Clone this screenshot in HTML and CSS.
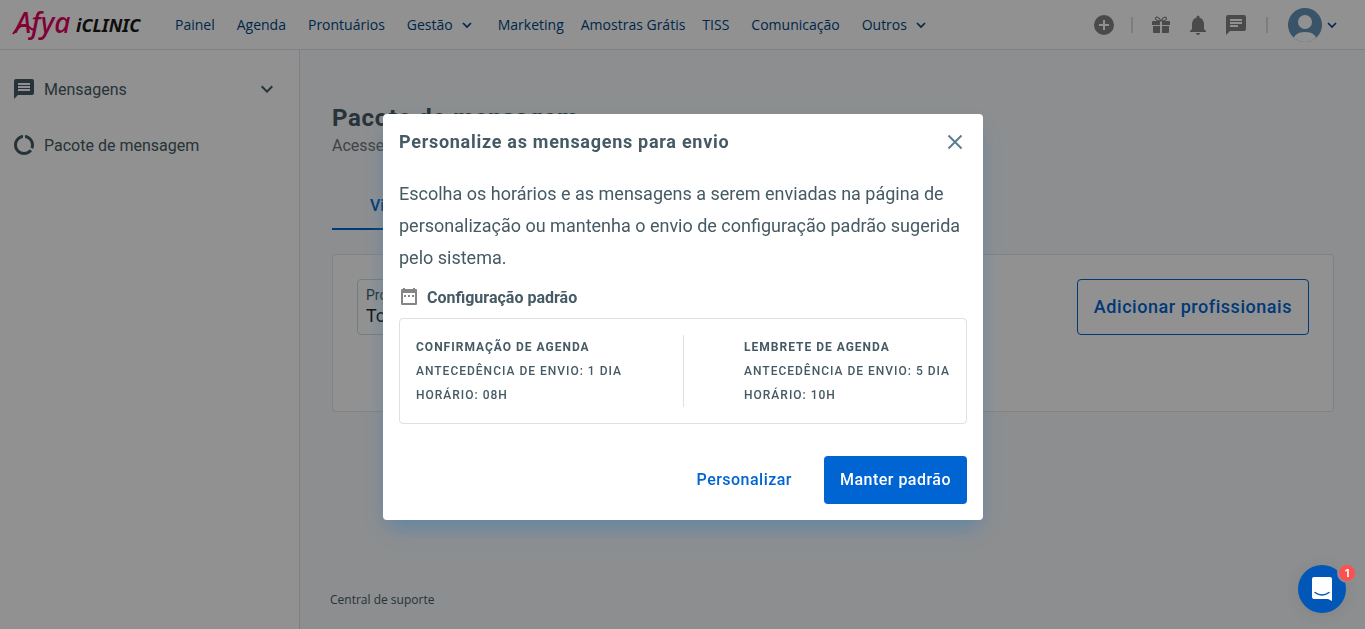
FILE: index.html
```html
<!DOCTYPE html>
<html lang="pt-BR">
<head>
<meta charset="utf-8">
<meta name="viewport" content="width=device-width, initial-scale=1">
<title>Pacote de mensagem</title>
<link rel="stylesheet" href="styles.css">
</head>
<body>
<div class="app">
  <header class="topbar">
    <a class="brand" href="#" aria-label="Afya iClinic">
      <svg width="132" height="44" viewBox="0 0 132 44">
        <text class="brand-afya" x="4" y="30">Afya</text>
        <path d="M2 31c5-7 11-12 16-7 1.500 1.500 3 2.500 5 3" fill="none" stroke="#e4005f" stroke-width="2"/>
        <text class="brand-iclinic" x="65" y="29">iCLINIC</text>
      </svg>
    </a>
    <nav class="nav">
      <a class="nav-item nav-item-wide" href="#">Painel</a>
      <a class="nav-item nav-item-wide" href="#">Agenda</a>
      <a class="nav-item nav-item-wide" href="#">Prontuários</a>
      <a class="nav-item nav-item-wide" href="#">Gestão
        <svg width="18" height="18" viewBox="0 0 18 18"><path d="M5 7l4 4 4-4" fill="none" stroke="currentColor" stroke-width="1.700"/></svg></a>
      <a class="nav-item" href="#">Marketing</a>
      <a class="nav-item" href="#">Amostras Grátis</a>
      <a class="nav-item nav-item-wide" href="#">TISS</a>
      <a class="nav-item nav-item-wide" href="#">Comunicação</a>
      <a class="nav-item nav-item-wide" href="#">Outros
        <svg width="18" height="18" viewBox="0 0 18 18"><path d="M5 7l4 4 4-4" fill="none" stroke="currentColor" stroke-width="1.700"/></svg></a>
    </nav>
    <div class="tools">
      <button class="tool" type="button" aria-label="Adicionar">
        <svg width="24" height="24" viewBox="0 0 24 24"><path fill="currentColor" d="M12 2a10 10 0 1 0 0 20 10 10 0 0 0 0-20zm5 11h-4v4h-2v-4H7v-2h4V7h2v4h4z"/></svg>
      </button>
      <span class="tool-divider"></span>
      <button class="tool tool-gift" type="button" aria-label="Novidades">
        <svg width="18" height="18" viewBox="0 0 18 18"><path fill="currentColor" d="M1 5h7v4H0V6q0-1 1-1zM10 5h7q1 0 1 1v3h-8zM1 10h7v7H2q-1 0-1-1zM10 10h7v6q0 1-1 1h-6z"/><path d="M9 5C7 1 4 0 3.500 2.500 3.500 4 5.500 5 9 5zM9 5c2-4 5-5 5.500-2.500C14.500 4 12.500 5 9 5z" fill="none" stroke="currentColor" stroke-width="1.200"/></svg>
      </button>
      <button class="tool tool-bell" type="button" aria-label="Notificações">
        <svg width="24" height="24" viewBox="0 0 24 24"><path fill="currentColor" d="M12 22c1.100 0 2-.9 2-2h-4a2 2 0 0 0 2 2zm6-6v-5c0-3.070-1.640-5.640-4.500-6.320V4a1.500 1.500 0 0 0-3 0v.68C7.630 5.360 6 7.920 6 11v5l-2 2v1h16v-1z"/></svg>
      </button>
      <button class="tool tool-chat" type="button" aria-label="Mensagens">
        <svg width="24" height="24" viewBox="0 0 24 24"><path fill="currentColor" d="M20 2H4a2 2 0 0 0-2 2v18l4-4h14a2 2 0 0 0 2-2V4a2 2 0 0 0-2-2zM6 6h12v2H6zm8 8H6v-2h8zm4-3H6V9h12z"/></svg>
      </button>
      <span class="tool-divider"></span>
      <button class="tool tool-user" type="button" aria-label="Conta">
        <svg width="34" height="34" viewBox="0 0 34 34"><defs><clipPath id="avatar"><circle cx="17" cy="17" r="17"/></clipPath></defs><g clip-path="url(#avatar)"><path fill="#6592b8" d="M0 0h34v34H0z"/><circle cx="17" cy="14" r="7" fill="#fff"/><path fill="#fff" d="M5 34c0-7 5-10 12-10s12 3 12 10z"/></g></svg>
        <svg width="18" height="18" viewBox="0 0 18 18"><path d="M5 7l4 4 4-4" fill="none" stroke="#004a92" stroke-width="1.700"/></svg>
      </button>
    </div>
  </header>

  <div class="layout">
    <aside class="sidebar">
      <a class="side-link" href="#">
        <svg width="24" height="24" viewBox="0 0 24 24"><path fill="currentColor" d="M20 2H4a2 2 0 0 0-2 2v18l4-4h14a2 2 0 0 0 2-2V4a2 2 0 0 0-2-2zm-2 12H6v-2h12zm0-3H6V9h12zm0-3H6V6h12z"/></svg>
        <span>Mensagens</span>
        <svg class="side-arrow" width="24" height="24" viewBox="0 0 24 24"><path fill="currentColor" d="M7.410 8.590 12 13.170l4.590-4.580L18 10l-6 6-6-6z"/></svg>
      </a>
      <a class="side-link" href="#">
        <svg width="24" height="24" viewBox="0 0 24 24"><path fill="currentColor" d="M13 2.050v3.030c3.390.49 6 3.390 6 6.920 0 .9-.18 1.750-.48 2.540l2.600 1.530c.56-1.240.88-2.620.88-4.070 0-5.180-3.950-9.450-9-9.950zM12 19c-3.870 0-7-3.130-7-7 0-3.530 2.610-6.430 6-6.920V2.050c-5.060.5-9 4.760-9 9.950 0 5.520 4.470 10 9.990 10 3.310 0 6.240-1.610 8.060-4.090l-2.600-1.530A6.950 6.950 0 0 1 12 19z"/></svg>
        <span>Pacote de mensagem</span>
      </a>
    </aside>

    <main class="content">
      <h1 class="page-title">Pacote de mensagem</h1>
      <p class="page-subtitle">Acesse</p>
      <div class="tabs"><button class="tab" type="button">Visão geral</button></div>
      <section class="card">
        <label class="field" for="professional">
          <span class="field-label">Profissional</span>
          <select class="field-select" id="professional"><option>Todos</option></select>
        </label>
        <button class="btn btn-outline" type="button">Adicionar profissionais</button>
      </section>
      <footer class="footer"><a class="footer-link" href="#">Central de suporte</a></footer>
    </main>
  </div>
</div>

<div class="overlay">
  <section class="modal" role="dialog" aria-modal="true" aria-labelledby="modal-title">
    <header class="modal-header">
      <h2 class="modal-title" id="modal-title">Personalize as mensagens para envio</h2>
      <button class="modal-close" type="button" aria-label="Fechar">
        <svg width="24" height="24" viewBox="0 0 24 24"><path d="M5.500 5.500l13 13M18.500 5.500l-13 13" fill="none" stroke="currentColor" stroke-width="2"/></svg>
      </button>
    </header>
    <p class="modal-text">Escolha os horários e as mensagens a serem enviadas na página de personalização ou mantenha o envio de configuração padrão sugerida pelo sistema.</p>
    <h3 class="defaults-title">
      <svg width="20" height="20" viewBox="0 0 20 20"><path fill="#858585" fill-rule="evenodd" d="M4 0h2v1h8V0h2v1h1q1 0 1 1v14q0 1-1 1H3q-1 0-1-1V2q0-1 1-1h1zM4 5v10h12V5zM5 7h2v2H5zM9 7h2v2H9zM13 7h2v2h-2z"/></svg>
      Configuração padrão
    </h3>
    <div class="defaults">
      <div class="rule"><strong class="rule-name">Confirmação de agenda</strong><span>Antecedência de envio: 1 dia</span><span>Horário: 08h</span></div>
      <div class="defaults-divider"></div>
      <div class="rule"><strong class="rule-name">Lembrete de agenda</strong><span>Antecedência de envio: 5 dia</span><span>Horário: 10h</span></div>
    </div>
    <div class="modal-actions">
      <button class="btn btn-text" type="button">Personalizar</button>
      <button class="btn btn-primary" type="button">Manter padrão</button>
    </div>
  </section>
</div>

<button class="chat-launcher" type="button" aria-label="Abrir chat">
  <svg width="24" height="28" viewBox="0 0 24 28"><path fill="#fff" d="M4 2h16q2 0 2 2v22l-4-2H4q-2 0-2-2V4q0-2 2-2z"/><path d="M5 17.500q7 5 14 0" fill="none" stroke="#0057b8" stroke-width="1.500" stroke-linecap="round"/></svg>
  <span class="chat-badge">1</span>
</button>
</body>
</html>
```
FILE: styles.css
```css
* {
  box-sizing: border-box;
}

body {
  margin: 0;
  font-family: Roboto, "Liberation Sans", sans-serif;
  font-size: 16px;
  color: #455a64;
  background: #f7f9fc;
}

h1, h2, h3, p {
  margin: 0;
}

a {
  color: inherit;
  text-decoration: none;
}

button {
  padding: 0;
  border: 0;
  background: none;
  color: inherit;
  font: inherit;
  cursor: pointer;
}

svg {
  display: block;
  flex: none;
}

.app {
  display: flex;
  flex-direction: column;
  min-height: 100vh;
}

/* Top bar */
.topbar {
  display: flex;
  align-items: center;
  height: 50px;
  padding: 0 24px 0 11px;
  border-bottom: 1px solid #dce2ea;
  background: #fff;
}

.brand {
  margin-right: 32px;
}

.brand-afya {
  font: italic 500 28px "Noto Sans", sans-serif;
  fill: #e4005f;
}

.brand-iclinic {
  font: italic 700 18px "Noto Sans", sans-serif;
  fill: #1a1a1a;
}

.nav {
  display: flex;
  gap: 17px;
}

.nav-item {
  display: flex;
  align-items: center;
  gap: 5px;
  font: 14px/20px "Open Sans", sans-serif;
  color: #004583;
  white-space: nowrap;
}

.nav-item-wide {
  margin-right: 5px;
}

.tools {
  display: flex;
  align-items: center;
  margin-left: auto;
  color: #828282;
}

.tool-divider {
  width: 2px;
  height: 16px;
  margin: 0 15px;
  background: #dcdcdc;
}

.tool-gift {
  margin-left: 4px;
}

.tool-bell {
  margin-left: 16px;
}

.tool-chat {
  margin: 0 3px 0 14px;
}

.tool-user {
  display: flex;
  align-items: center;
  gap: 1px;
  margin-left: 5px;
}

/* Page */
.layout {
  display: flex;
  flex: 1;
}

.sidebar {
  flex: none;
  width: 300px;
  padding: 11px 0;
  border-right: 1px solid #dcdfe3;
  background: #fff;
}

.side-link {
  display: flex;
  align-items: center;
  gap: 8px;
  height: 56px;
  padding: 0 20px 0 12px;
}

.side-arrow {
  margin-left: auto;
}

.content {
  display: flex;
  flex: 1;
  flex-direction: column;
  padding: 52px 31px 20px 32px;
}

.page-title {
  font-size: 24px;
  line-height: 32px;
  font-weight: 700;
  letter-spacing: 0.03em;
}

.page-subtitle {
  line-height: 24px;
  color: #757575;
}

.tabs {
  margin: 24px 0;
}

.tab {
  height: 48px;
  padding: 0 38px;
  border-bottom: 2px solid #0064d2;
  color: #0064d2;
  font-weight: 500;
}

.card {
  display: flex;
  justify-content: space-between;
  align-items: flex-start;
  min-height: 158px;
  padding: 24px;
  border: 1px solid #e1e5ea;
  border-radius: 4px;
  background: #fff;
}

.field {
  display: flex;
  flex-direction: column;
  width: 300px;
  height: 56px;
  padding: 7px 8px;
  border: 1px solid #cfd8dc;
  border-radius: 4px;
}

.field-label {
  font-size: 14px;
  line-height: 16px;
}

.field-select {
  padding: 0;
  border: 0;
  appearance: none;
  background: none;
  color: #212121;
  font: 18px/26px Roboto, sans-serif;
}

.footer {
  margin-top: auto;
  margin-left: -2px;
  font: 12px/18px "Open Sans", sans-serif;
}

/* Buttons */
.btn {
  height: 48px;
  padding: 0 16px 2px;
  border-radius: 4px;
  font-weight: 500;
  letter-spacing: 0.03em;
}

.btn-outline {
  height: 56px;
  border: 1px solid #0064d2;
  color: #0064d2;
  font-size: 18px;
}

.btn-text {
  color: #0064d2;
}

.btn-primary {
  background: #0064d2;
  color: #fff;
}

/* Dialog */
.overlay {
  position: fixed;
  inset: 0;
  display: flex;
  align-items: center;
  justify-content: center;
  padding: 5px 0 0 1px;
  background: rgba(0, 0, 0, 0.43);
}

.modal {
  width: 600px;
  max-width: 100%;
  padding: 16px;
  border-radius: 4px;
  background: #fff;
  box-shadow: 0 12px 20px -4px rgba(70, 130, 180, 0.6), 0 4px 24px rgba(0, 0, 0, 0.04);
}

.modal-header {
  display: flex;
  align-items: center;
  justify-content: space-between;
  height: 24px;
  margin-bottom: 24px;
}

.modal-title {
  font-size: 18px;
  line-height: 24px;
  letter-spacing: 0.04em;
}

.modal-close {
  color: #5c7f90;
}

.modal-text {
  font-size: 18px;
  line-height: 32px;
}

.defaults-title {
  display: flex;
  align-items: center;
  gap: 8px;
  margin: 12px 0 8px;
  font-size: 16px;
  line-height: 24px;
}

.defaults {
  display: flex;
  justify-content: space-between;
  padding: 16px;
  border: 1px solid #e0e0e0;
  border-radius: 4px;
}

.rule {
  display: flex;
  flex-direction: column;
  font-size: 12px;
  line-height: 24px;
  font-weight: 500;
  letter-spacing: 1px;
  text-transform: uppercase;
}

.rule-name {
  font-weight: 700;
}

.defaults-divider {
  width: 1px;
  background: #e0e0e0;
}

.modal-actions {
  display: flex;
  justify-content: flex-end;
  gap: 16px;
  margin-top: 32px;
}

/* Chat launcher */
.chat-launcher {
  position: fixed;
  right: 19px;
  bottom: 16px;
  display: grid;
  place-items: center;
  width: 48px;
  height: 48px;
  border-radius: 50%;
  background: #0057b8;
  box-shadow: 0 2px 16px rgba(0, 0, 0, 0.08);
}

.chat-badge {
  position: absolute;
  top: -2px;
  right: -11px;
  width: 20px;
  height: 20px;
  border: 2px solid #8d8e90;
  border-radius: 50%;
  background: #ff5050;
  color: #fff;
  font: 700 11px/16px Inter, sans-serif;
  text-align: center;
}
```
